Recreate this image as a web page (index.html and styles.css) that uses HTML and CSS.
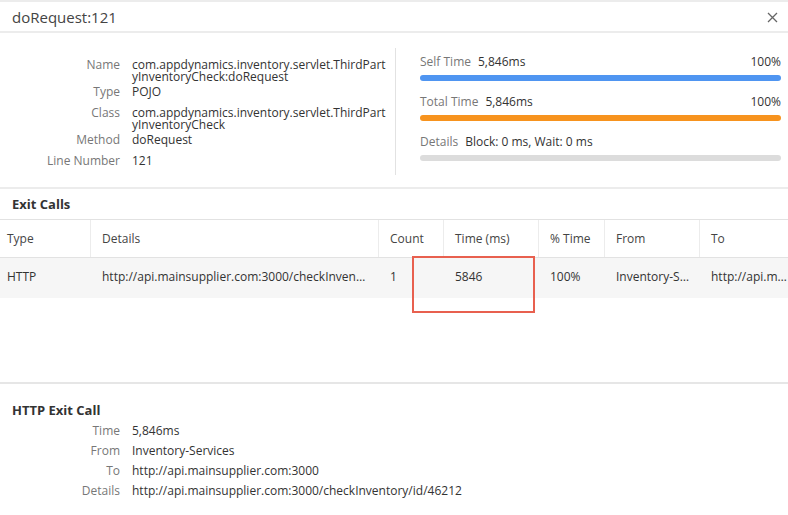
FILE: index.html
```html
<!DOCTYPE html>
<html>
<head>
  <meta charset="UTF-8">
  <meta name="viewport" content="width=device-width, initial-scale=1.0">
  <link rel="stylesheet" href="styles.css">
</head>
<body>
  <div class="modal">
    <div class="modal-header">
      <div class="modal-title">doRequest:121</div>
      <svg class="close-icon" width="11" height="11" viewBox="0 0 11 11">
        <path d="M1 1 L10 10 M10 1 L1 10" stroke="#666" stroke-width="1.3" fill="none" />
      </svg>
    </div>

    <div class="summary">
      <div class="summary-info">
        <div class="kv-row"><span class="kv-label">Name</span><span class="kv-value">com.appdynamics.inventory.servlet.ThirdPartyInventoryCheck:doRequest</span></div>
        <div class="kv-row"><span class="kv-label">Type</span><span class="kv-value">POJO</span></div>
        <div class="kv-row"><span class="kv-label">Class</span><span class="kv-value">com.appdynamics.inventory.servlet.ThirdPartyInventoryCheck</span></div>
        <div class="kv-row"><span class="kv-label">Method</span><span class="kv-value">doRequest</span></div>
        <div class="kv-row"><span class="kv-label">Line Number</span><span class="kv-value">121</span></div>
      </div>
      <div class="summary-times">
        <div class="time-block">
          <div class="time-line"><span class="time-label">Self Time</span><span class="time-value">5,846ms</span><span class="time-pct">100%</span></div>
          <div class="bar bar-self"></div>
        </div>
        <div class="time-block">
          <div class="time-line"><span class="time-label">Total Time</span><span class="time-value">5,846ms</span><span class="time-pct">100%</span></div>
          <div class="bar bar-total"></div>
        </div>
        <div class="time-block">
          <div class="time-line"><span class="time-label">Details</span><span class="time-value">Block: 0 ms, Wait: 0 ms</span></div>
          <div class="bar bar-details"></div>
        </div>
      </div>
    </div>

    <div class="exit-calls">
      <div class="section-title">Exit Calls</div>
      <div class="grid">
        <div class="grid-row grid-head">
          <div class="cell col-type">Type</div>
          <div class="cell col-details">Details</div>
          <div class="cell col-count">Count</div>
          <div class="cell col-time">Time (ms)</div>
          <div class="cell col-pct">% Time</div>
          <div class="cell col-from">From</div>
          <div class="cell col-to">To</div>
        </div>
        <div class="grid-row grid-body">
          <div class="cell col-type">HTTP</div>
          <div class="cell col-details">http://api.mainsupplier.com:3000/checkInventory/id/46212</div>
          <div class="cell col-count">1</div>
          <div class="cell col-time">5846</div>
          <div class="cell col-pct">100%</div>
          <div class="cell col-from">Inventory-Services</div>
          <div class="cell col-to">http://api.mainsupplier.com:3000</div>
        </div>
        <div class="highlight"></div>
      </div>
    </div>

    <div class="exit-detail">
      <div class="section-title">HTTP Exit Call</div>
      <div class="detail-list">
        <div class="detail-row"><span class="kv-label">Time</span><span class="kv-value">5,846ms</span></div>
        <div class="detail-row"><span class="kv-label">From</span><span class="kv-value">Inventory-Services</span></div>
        <div class="detail-row"><span class="kv-label">To</span><span class="kv-value">http://api.mainsupplier.com:3000</span></div>
        <div class="detail-row"><span class="kv-label">Details</span><span class="kv-value">http://api.mainsupplier.com:3000/checkInventory/id/46212</span></div>
      </div>
    </div>
  </div>
</body>
</html>
```

FILE: styles.css
```css
body {
  margin: 0;
  background: #fff;
  font-family: "Open Sans", Arial, sans-serif;
  font-size: 12px;
  color: #333;
}
.modal {
  border-top: 2px solid #ececec;
  height: 513px;
  overflow: hidden;
}
.modal-header {
  display: flex;
  align-items: center;
  justify-content: space-between;
  height: 29px;
  padding: 0 10px 0 12px;
  border-bottom: 2px solid #ececec;
}
.modal-title {
  font-size: 15px;
  color: #444;
}
.close-icon {
  margin-top: 2px;
}
.summary {
  display: flex;
  padding: 15px 0 12px;
  border-bottom: 2px solid #ececec;
}
.summary-info {
  width: 396px;
  border-right: 1px solid #e2e2e2;
  padding: 11px 0 8px;
  box-sizing: border-box;
}
.kv-row {
  display: flex;
  min-height: 21px;
  padding-bottom: 3px;
  box-sizing: border-box;
  line-height: 12px;
}
.kv-row:last-child {
  min-height: 0;
  padding-bottom: 0;
}
.kv-label {
  width: 132px;
  flex: none;
  text-align: right;
  color: #777;
  padding-right: 12px;
  box-sizing: border-box;
}
.kv-value {
  color: #333;
}
.kv-row .kv-value {
  width: 256px;
  word-break: break-all;
}
.summary-times {
  flex: 1;
  padding: 5px 7px 0 24px;
}
.time-block {
  margin-bottom: 12px;
}
.time-block:last-child {
  margin-bottom: 0;
}
.time-line {
  display: flex;
  line-height: 18px;
  margin-bottom: 4px;
}
.time-label {
  color: #777;
  margin-right: 7px;
}
.time-pct {
  margin-left: auto;
}
.bar {
  height: 6px;
  border-radius: 3px;
}
.bar-self {
  background: #4f95f1;
}
.bar-total {
  background: #f7931e;
}
.bar-details {
  background: #dcdcdc;
}
.section-title {
  font-weight: bold;
  font-size: 13px;
  color: #333;
  padding-left: 12px;
}
.exit-calls .section-title {
  line-height: 30px;
  border-bottom: 1px solid #e2e2e2;
}
.grid {
  position: relative;
  height: 162px;
  border-bottom: 2px solid #e6e6e6;
}
.grid-row {
  display: flex;
}
.grid-head {
  height: 37px;
  border-bottom: 1px solid #e2e2e2;
  color: #444;
}
.grid-body {
  height: 40px;
  background: #f6f6f6;
}
.cell {
  display: flex;
  align-items: center;
  padding: 0 11px;
  box-sizing: border-box;
  white-space: nowrap;
  overflow: hidden;
}
.grid-head .cell {
  border-right: 1px solid #ececec;
}
.grid-head .cell:last-child {
  border-right: none;
}
.grid-body .cell {
  display: block;
  line-height: 38px;
  text-overflow: ellipsis;
}
.col-type {
  width: 91px;
  padding-left: 7px;
}
.col-details {
  width: 288px;
}
.col-count {
  width: 65px;
}
.col-time {
  width: 95px;
}
.col-pct {
  width: 66px;
}
.col-from {
  width: 95px;
}
.col-to {
  width: 88px;
  padding-right: 0;
}
.highlight {
  position: absolute;
  left: 412px;
  top: 36px;
  width: 123px;
  height: 57px;
  border: 2px solid #e8604f;
  box-sizing: border-box;
}
.exit-detail {
  padding-top: 17px;
}
.exit-detail .section-title {
  line-height: 18px;
  margin-bottom: 2px;
}
.detail-row {
  display: flex;
  line-height: 20px;
}
```
